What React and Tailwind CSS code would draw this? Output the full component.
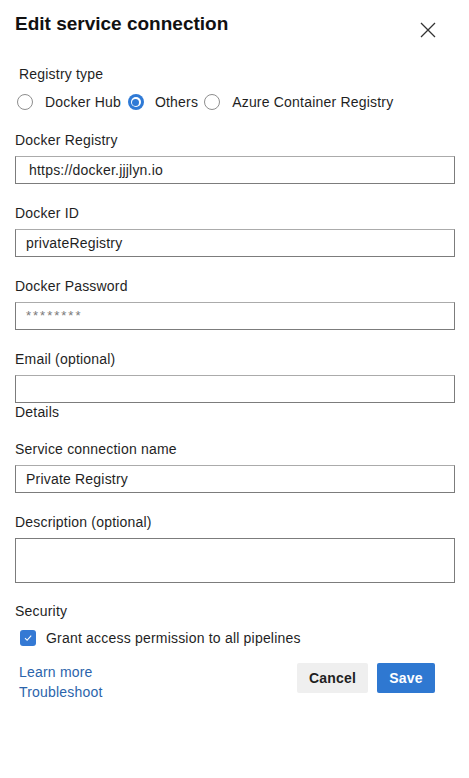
import React from "react";

function Radio({ checked }) {
  if (checked) {
    return (
      <span className="w-4 h-4 rounded-full bg-[#2f7ad6] flex items-center justify-center shrink-0">
        <span className="w-[10px] h-[10px] rounded-full bg-white flex items-center justify-center">
          <span className="w-[7px] h-[7px] rounded-full bg-[#2f7ad6]" />
        </span>
      </span>
    );
  }
  return <span className="w-4 h-4 rounded-full border border-[#8e8e8e] bg-white shrink-0" />;
}

function Field({ label, value, muted, pl = "pl-[10px]" }) {
  return (
    <div className="flex flex-col">
      <div className="h-5 leading-5 text-[14px] text-[#1f1f1f]">{label}</div>
      <div
        className={`mt-[6px] h-7 w-[440px] border border-[#7c7c7c] border-t-[#ababab] bg-white flex items-center ${pl} ${
          muted ? "text-[13px] text-[#7a7a7a] tracking-[2px]" : "text-[14px] text-[#1f1f1f]"
        }`}
      >
        {value}
      </div>
    </div>
  );
}

export default function App() {
  return (
    <div
      className="w-[469px] h-[778px] bg-white pl-[15px] pt-[10px] flex flex-col tracking-[0.2px]"
      style={{ fontFamily: '"Liberation Sans", Arial, sans-serif' }}
    >
      <div className="flex items-start justify-between pr-[33px]">
        <div className="h-7 leading-7 text-[19px] font-bold text-[#111] tracking-normal">Edit service connection</div>
        <svg className="mt-[12px]" width="16" height="16" viewBox="0 0 16 16">
          <path d="M1 1 L15 15 M15 1 L1 15" stroke="#333" strokeWidth="1.3" fill="none" />
        </svg>
      </div>

      <div className="mt-[26px] ml-[4px] h-5 leading-5 text-[14px] text-[#1f1f1f]">Registry type</div>
      <div className="mt-[8px] h-5 flex items-center text-[14px] text-[#1f1f1f] ml-[2px]">
        <Radio />
        <span className="ml-[12px]">Docker Hub</span>
        <span className="ml-[7px]" />
        <Radio checked />
        <span className="ml-[11px]">Others</span>
        <span className="ml-[6px]" />
        <Radio />
        <span className="ml-[12px]">Azure Container Registry</span>
      </div>

      <div className="mt-[18px] flex flex-col gap-[19px]">
        <Field label="Docker Registry" value="https://docker.jjjlyn.io" pl="pl-[13px]" />
        <Field label="Docker ID" value="privateRegistry" />
        <Field label="Docker Password" value="********" muted />
        <Field label="Email (optional)" value="" />
      </div>

      <div className="mt-[-1px] h-5 leading-5 text-[14px] text-[#1f1f1f]">Details</div>

      <div className="mt-[17px] flex flex-col gap-[19px]">
        <Field label="Service connection name" value="Private Registry" />
        <div className="flex flex-col">
          <div className="h-5 leading-5 text-[14px] text-[#1f1f1f]">Description (optional)</div>
          <div className="mt-[6px] h-[45px] w-[440px] border border-[#7c7c7c] bg-white" />
        </div>
      </div>

      <div className="mt-[18px] h-5 leading-5 text-[14px] text-[#1f1f1f]">Security</div>
      <div className="mt-[7px] h-5 flex items-center ml-[5px]">
        <span className="w-4 h-4 rounded-[3px] bg-[#3479d4] flex items-center justify-center shrink-0">
          <svg width="10" height="10" viewBox="0 0 10 10">
            <path d="M2 5.2 L4.1 7.3 L8.2 2.6" stroke="white" strokeWidth="1.1" fill="none" />
          </svg>
        </span>
        <span className="ml-[10px] text-[14px] text-[#1f1f1f]">Grant access permission to all pipelines</span>
      </div>

      <div className="mt-[15px] flex items-start justify-between pr-[34px]">
        <div className="flex flex-col ml-[4px] mt-[-1px] text-[14px] text-[#2b64ab] leading-5">
          <span>Learn more</span>
          <span>Troubleshoot</span>
        </div>
        <div className="flex gap-[9px]">
          <button className="h-[30px] w-[71px] rounded-[2px] bg-[#efefef] text-[14px] font-bold text-[#1f1f1f]">
            Cancel
          </button>
          <button className="h-[30px] w-[58px] rounded-[2px] bg-[#2f78d1] text-[14px] font-bold text-white">
            Save
          </button>
        </div>
      </div>
    </div>
  );
}
